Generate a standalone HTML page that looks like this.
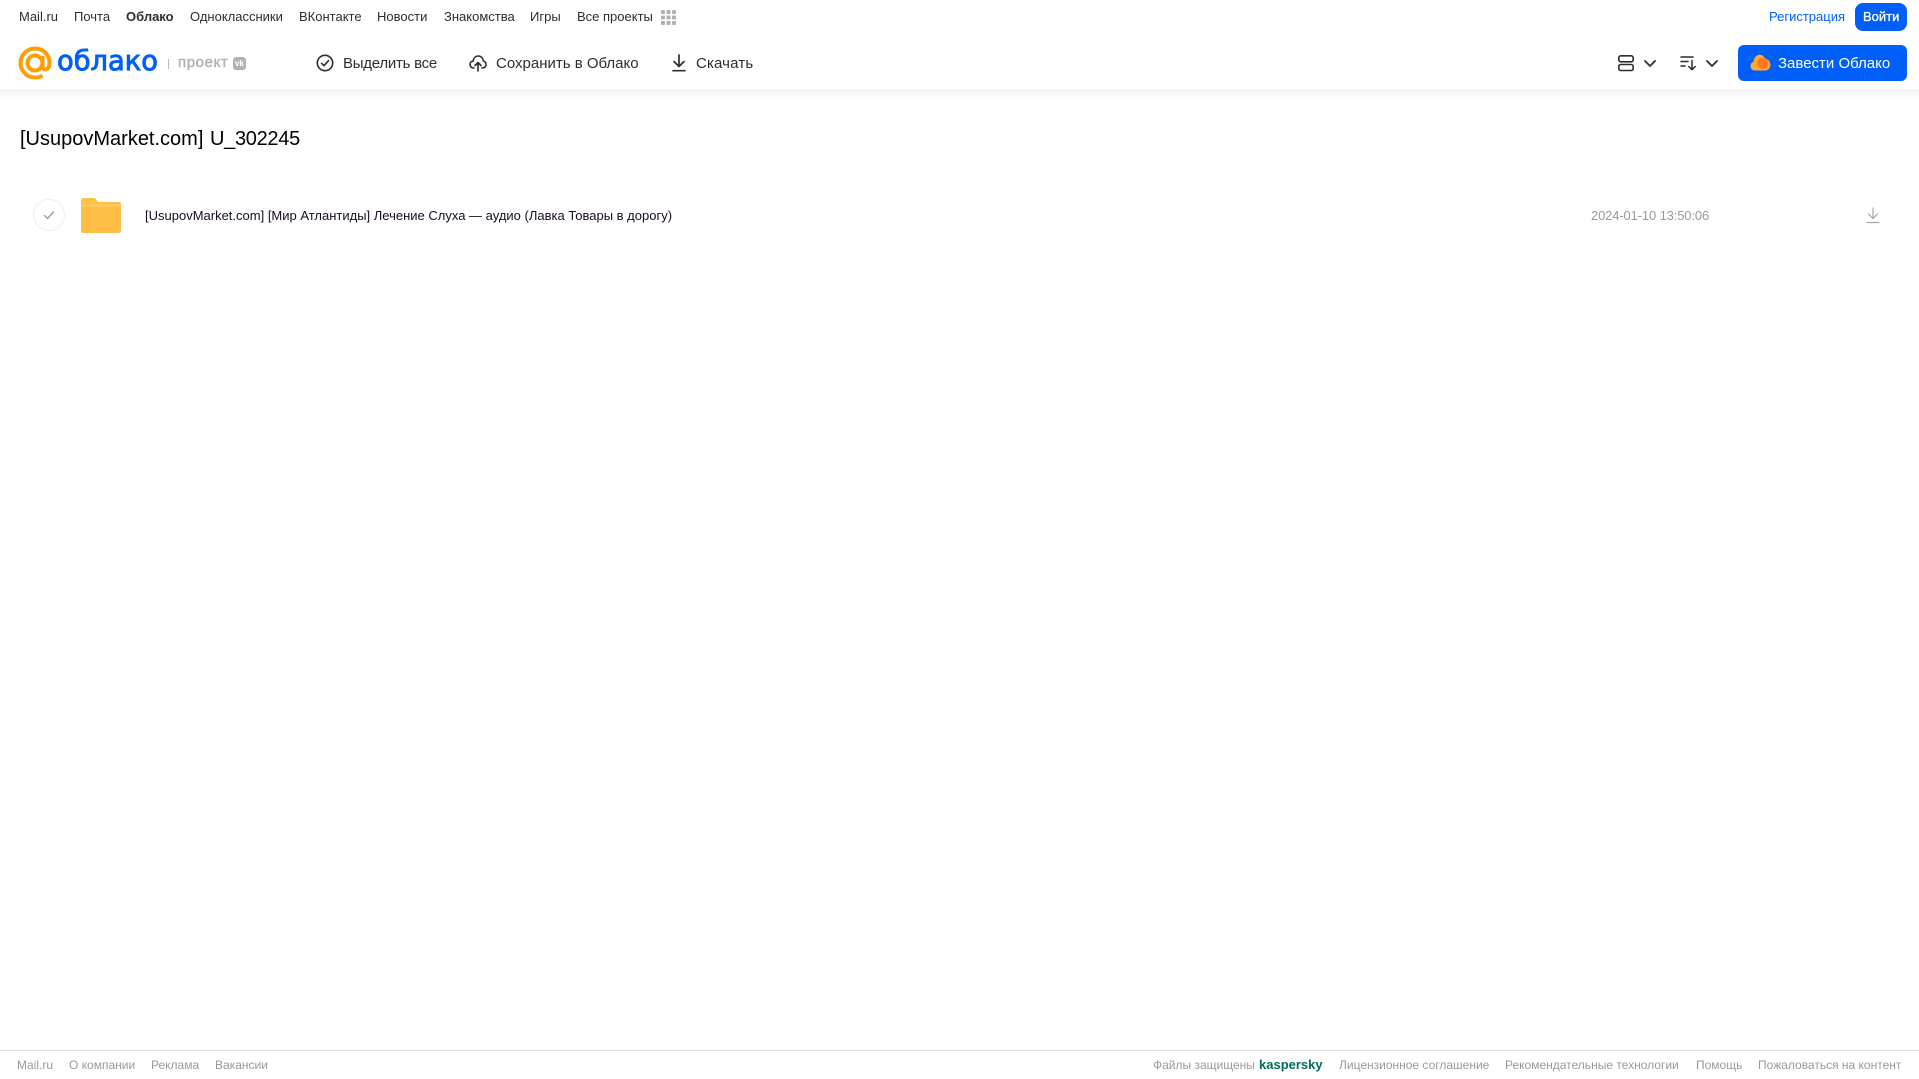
<!DOCTYPE html>
<html lang="ru">
<head>
<meta charset="utf-8">
<title>Облако</title>
<style>
html,body{margin:0;padding:0;background:#fff;}
body{width:1919px;height:1079px;position:relative;overflow:hidden;font-family:"Liberation Sans",sans-serif;}
.t{position:absolute;white-space:nowrap;line-height:20px;}
.n{top:7px;font-size:13px;color:#2c2d2e;}
.a{top:54px;font-size:15px;color:#2c2d2e;}
.f{top:1055px;font-size:12px;color:#999;}
svg{position:absolute;display:block;}
</style>
</head>
<body>
<div style="position:absolute;left:0;top:91px;width:1919px;height:11px;background:linear-gradient(#f6f6f6,#fff);"></div>
<div style="position:absolute;left:0;top:90px;width:1919px;height:1px;background:#eee;"></div>

<span class="t n" style="left:19px;">Mail.ru</span>
<span class="t n" style="left:74px;">Почта</span>
<span class="t n" style="left:126px;font-weight:bold;">Облако</span>
<span class="t n" style="left:190px;">Одноклассники</span>
<span class="t n" style="left:299px;">ВКонтакте</span>
<span class="t n" style="left:377px;">Новости</span>
<span class="t n" style="left:444px;">Знакомства</span>
<span class="t n" style="left:530px;">Игры</span>
<span class="t n" style="left:577px;">Все проекты</span>
<svg style="left:661px;top:10px;" width="15" height="15" viewBox="0 0 15 15" fill="#b0b0b0">
<rect x="0" y="0" width="4" height="4" rx="1"/><rect x="5.5" y="0" width="4" height="4" rx="1"/><rect x="11" y="0" width="4" height="4" rx="1"/>
<rect x="0" y="5.5" width="4" height="4" rx="1"/><rect x="5.5" y="5.5" width="4" height="4" rx="1"/><rect x="11" y="5.5" width="4" height="4" rx="1"/>
<rect x="0" y="11" width="4" height="4" rx="1"/><rect x="5.5" y="11" width="4" height="4" rx="1"/><rect x="11" y="11" width="4" height="4" rx="1"/>
</svg>

<span class="t" style="left:1769px;top:7px;font-size:13px;color:#005ff9;">Регистрация</span>
<div style="position:absolute;left:1855px;top:3px;width:52px;height:28px;border-radius:8px;background:#005ff9;"></div>
<span class="t" style="left:1863px;top:7px;font-size:13px;color:#fff;-webkit-text-stroke:.3px #fff;">Войти</span>

<svg style="left:18px;top:46px;" width="34" height="34" viewBox="0 0 34 34" fill="none" stroke="#ff9e00" stroke-width="4">
<circle cx="17" cy="17" r="7.5"/>
<path d="M24.5 10v9.5c0 5.5 7 5.500 7-2.500C31.500 8.500 25 2.500 17 2.500S2.500 9 2.500 17 9 31.500 17 31.500c3 0 5.500-.7 7.500-2"/>
</svg>
<span class="t" style="left:57px;top:46px;font-size:27.3px;line-height:32px;color:#005ff9;font-family:'DejaVu Sans',sans-serif;-webkit-text-stroke:.9px #005ff9;">облако</span>
<div style="position:absolute;left:168px;top:59px;width:1px;height:10px;background:#bbb;"></div>
<span class="t" style="left:178px;top:53px;font-size:15px;color:#b0b0b0;letter-spacing:.6px;-webkit-text-stroke:.4px #b0b0b0;">проект</span>
<div style="position:absolute;left:233px;top:57px;width:13px;height:13px;border-radius:3px;background:#b3b3b3;"></div>
<span class="t" style="left:234px;top:58px;width:11px;text-align:center;font-size:8px;line-height:11px;color:#fff;font-weight:bold;">vk</span>

<svg style="left:316px;top:54px;" width="18" height="18" viewBox="0 0 18 18" fill="none" stroke="#2c2d2e" stroke-width="1.600">
<circle cx="9" cy="9" r="7.700"/><path d="M5.500 9.300l2.500 2.400 4.500-5" stroke-linecap="round" stroke-linejoin="round"/>
</svg>
<span class="t a" style="left:343px;letter-spacing:-.25px;">Выделить все</span>

<svg style="left:469px;top:54px;" width="18" height="18" viewBox="0 0 18 18" fill="none" stroke="#2c2d2e" stroke-width="1.600" stroke-linecap="round" stroke-linejoin="round">
<path d="M5 14H4.500C2.500 14 1 12.500 1 10.500 1 8.700 2.300 7.300 4 7.100 4.500 4.200 6.500 2 9.300 2c2.700 0 4.800 2.200 5 5 1.600.4 2.700 1.800 2.700 3.500 0 2-1.500 3.500-3.500 3.500H13"/>
<path d="M9 17V9M6 11.500L9 8.500l3 3"/>
</svg>
<span class="t a" style="left:496px;">Сохранить в Облако</span>

<svg style="left:671px;top:54px;" width="16" height="18" viewBox="0 0 16 18" fill="none" stroke="#2c2d2e" stroke-width="1.700" stroke-linecap="round" stroke-linejoin="round">
<path d="M8 1v11M3 7.500l5 5 5-5M2 16.700h12"/>
</svg>
<span class="t a" style="left:696px;letter-spacing:.15px;">Скачать</span>

<svg style="left:1617px;top:54px;" width="18" height="18" viewBox="0 0 18 18" fill="none" stroke="#2c2d2e" stroke-width="1.600">
<rect x="1.800" y="1.800" width="14.400" height="6" rx="2"/><rect x="1.800" y="10.500" width="14.400" height="6" rx="2"/>
</svg>
<svg style="left:1643px;top:59px;" width="14" height="9" viewBox="0 0 14 9" fill="none" stroke="#2c2d2e" stroke-width="1.800" stroke-linecap="round" stroke-linejoin="round"><path d="M2 2l5 5 5-5"/></svg>
<svg style="left:1680px;top:55px;" width="18" height="16" viewBox="0 0 18 16" fill="none" stroke="#2c2d2e" stroke-width="1.500" stroke-linecap="round" stroke-linejoin="round">
<path d="M1 2h12M1 6.500h7M1 11h4M12 5.500v9M8.800 11.500l3.200 3.200 3.200-3.200"/>
</svg>
<svg style="left:1705px;top:59px;" width="14" height="9" viewBox="0 0 14 9" fill="none" stroke="#2c2d2e" stroke-width="1.800" stroke-linecap="round" stroke-linejoin="round"><path d="M2 2l5 5 5-5"/></svg>

<div style="position:absolute;left:1738px;top:45px;width:169px;height:36px;border-radius:6px;background:#005ff9;"></div>
<svg style="left:1750px;top:54px;" width="21" height="17" viewBox="0 0 21 17">
<path d="M5 16.500C2.300 16.500.5 14.500.5 12c0-2 1.200-3.600 3-4.200C4 3.500 6.700.8 9.500.8c2.500 0 4.500 1.500 5.500 3.700 3 .5 5.500 3.200 5.500 6.200 0 3.300-2.500 5.800-5.700 5.800z" fill="#ffa930"/>
<circle cx="12.800" cy="9.500" r="5.500" fill="#ff7a1f"/>
</svg>
<span class="t" style="left:1778px;top:54px;font-size:15px;color:#fff;">Завести Облако</span>

<span class="t" style="left:20px;top:125px;font-size:20px;line-height:28px;color:#000;">[UsupovMarket.com]</span>
<span class="t" style="left:210px;top:125px;font-size:20px;line-height:28px;color:#000;letter-spacing:-.3px;">U_302245</span>

<svg style="left:32px;top:198px;" width="34" height="34" viewBox="0 0 34 34" fill="none">
<circle cx="17" cy="17" r="15.500" stroke="#eeeeee" stroke-width="1"/>
<path d="M12.500 17.500l3 3 6-6.500" stroke="#999" stroke-width="1.300" stroke-linecap="round" stroke-linejoin="round"/>
</svg>
<svg style="left:81px;top:198px;" width="40" height="35" viewBox="0 0 40 35">
<path d="M2 0h10c2 0 3 1 4 2.500L17 4h21c1.100 0 2 .9 2 2v27c0 1.100-.9 2-2 2H2c-1.100 0-2-.9-2-2V2C0 .9.900 0 2 0z" fill="#ffc048"/>
<path d="M0 8c0-1.100.9-2 2-2h36c1.100 0 2 .9 2 2v25c0 1.100-.9 2-2 2H2c-1.100 0-2-.9-2-2z" fill="#ffbf47"/>
<path d="M0 6.500h40v2H0z" fill="#ffcb66"/>
</svg>
<span class="t" style="left:145px;top:206px;font-size:13px;color:#1a0a24;">[UsupovMarket.com] [Мир Атлантиды] Лечение Слуха — аудио (Лавка Товары в дорогу)</span>
<span class="t" style="left:1591px;top:206px;font-size:13px;letter-spacing:-.14px;color:#999;">2024-01-10 13:50:06</span>
<svg style="left:1866px;top:206px;" width="14" height="18" viewBox="0 0 14 18" fill="none" stroke="#a5a5a5" stroke-width="1.200" stroke-linecap="round" stroke-linejoin="round">
<path d="M7 2v10.500M2.500 8l4.500 4.500L11.500 8M1 16.500h12"/>
</svg>

<div style="position:absolute;left:0;top:1050px;width:1919px;height:1px;background:#dcdcdc;"></div>
<span class="t f" style="left:17px;">Mail.ru</span>
<span class="t f" style="left:69px;">О компании</span>
<span class="t f" style="left:151px;">Реклама</span>
<span class="t f" style="left:215px;">Вакансии</span>
<span class="t f" style="left:1153px;">Файлы защищены</span>
<span class="t" style="left:1259px;top:1055px;font-size:13px;color:#006d5c;font-weight:bold;">kaspersky</span>
<span class="t f" style="left:1339px;">Лицензионное соглашение</span>
<span class="t f" style="left:1505px;">Рекомендательные технологии</span>
<span class="t f" style="left:1696px;">Помощь</span>
<span class="t f" style="left:1758px;">Пожаловаться на контент</span>
</body>
</html>
